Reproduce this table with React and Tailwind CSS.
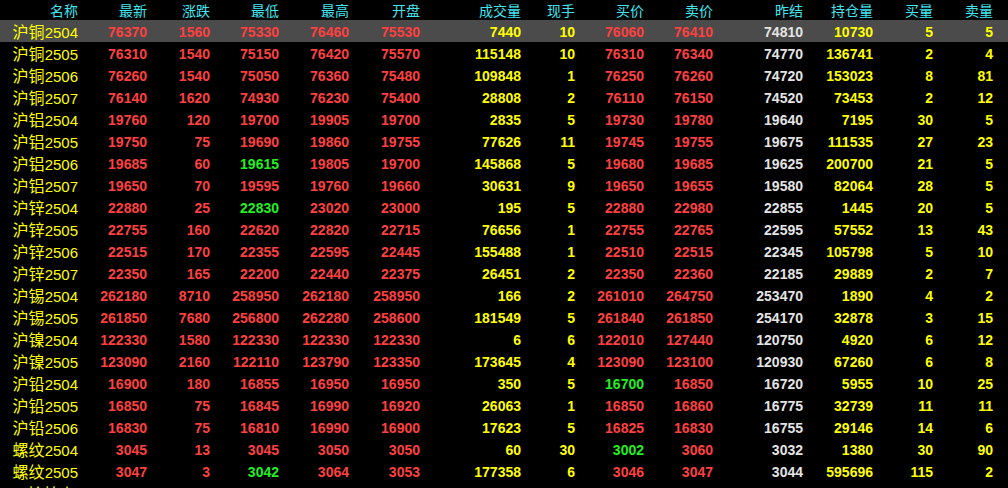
import React from "react";

const cols = ["名称", "最新", "涨跌", "最低", "最高", "开盘", "成交量", "现手", "买价", "卖价", "昨结", "持仓量", "买量", "卖量"];

// name, code, last, chg, low, high, open, vol, cur, bid, ask, prev, oi, bidQ, askQ
const rows = [
  ["沪铜", "2504", 76370, 1560, 75330, 76460, 75530, 7440, 10, 76060, 76410, 74810, 10730, 5, 5],
  ["沪铜", "2505", 76310, 1540, 75150, 76420, 75570, 115148, 10, 76310, 76340, 74770, 136741, 2, 4],
  ["沪铜", "2506", 76260, 1540, 75050, 76360, 75480, 109848, 1, 76250, 76260, 74720, 153023, 8, 81],
  ["沪铜", "2507", 76140, 1620, 74930, 76230, 75400, 28808, 2, 76110, 76150, 74520, 73453, 2, 12],
  ["沪铝", "2504", 19760, 120, 19700, 19905, 19700, 2835, 5, 19730, 19780, 19640, 7195, 30, 5],
  ["沪铝", "2505", 19750, 75, 19690, 19860, 19755, 77626, 11, 19745, 19755, 19675, 111535, 27, 23],
  ["沪铝", "2506", 19685, 60, 19615, 19805, 19700, 145868, 5, 19680, 19685, 19625, 200700, 21, 5],
  ["沪铝", "2507", 19650, 70, 19595, 19760, 19660, 30631, 9, 19650, 19655, 19580, 82064, 28, 5],
  ["沪锌", "2504", 22880, 25, 22830, 23020, 23000, 195, 5, 22880, 22980, 22855, 1445, 20, 5],
  ["沪锌", "2505", 22755, 160, 22620, 22820, 22715, 76656, 1, 22755, 22765, 22595, 57552, 13, 43],
  ["沪锌", "2506", 22515, 170, 22355, 22595, 22445, 155488, 1, 22510, 22515, 22345, 105798, 5, 10],
  ["沪锌", "2507", 22350, 165, 22200, 22440, 22375, 26451, 2, 22350, 22360, 22185, 29889, 2, 7],
  ["沪锡", "2504", 262180, 8710, 258950, 262180, 258950, 166, 2, 261010, 264750, 253470, 1890, 4, 2],
  ["沪锡", "2505", 261850, 7680, 256800, 262280, 258600, 181549, 5, 261840, 261850, 254170, 32878, 3, 15],
  ["沪镍", "2504", 122330, 1580, 122330, 122330, 122330, 6, 6, 122010, 127440, 120750, 4920, 6, 12],
  ["沪镍", "2505", 123090, 2160, 122110, 123790, 123350, 173645, 4, 123090, 123100, 120930, 67260, 6, 8],
  ["沪铅", "2504", 16900, 180, 16855, 16950, 16950, 350, 5, 16700, 16850, 16720, 5955, 10, 25],
  ["沪铅", "2505", 16850, 75, 16845, 16990, 16920, 26063, 1, 16850, 16860, 16775, 32739, 11, 11],
  ["沪铅", "2506", 16830, 75, 16810, 16990, 16900, 17623, 5, 16825, 16830, 16755, 29146, 14, 6],
  ["螺纹", "2504", 3045, 13, 3045, 3050, 3050, 60, 30, 3002, 3060, 3032, 1380, 30, 90],
  ["螺纹", "2505", 3047, 3, 3042, 3064, 3053, 177358, 6, 3046, 3047, 3044, 595696, 115, 2],
];

const grid =
  "grid grid-cols-[78px_69px_63px_69px_70px_71px_101px_54px_69px_69px_90px_70px_60px_60px]";

const RED = "text-[#ff4040]";
const GREEN = "text-[#22f022]";
const YELLOW = "text-[#ffff00]";
const WHITE = "text-[#e4e4e4]";

const priceColor = (v, prev) => (v < prev ? GREEN : RED);

const Num = ({ v, color }) => (
  <div className={`text-right font-bold text-[14px] leading-[22px] ${color}`}>{v}</div>
);

const Row = ({ r, active }) => {
  const [name, code, last, chg, low, high, open, vol, cur, bid, ask, prev, oi, bq, aq] = r;
  return (
    <div className={`${grid} h-[22px] items-center ${active ? "bg-[#4b4b4b]" : ""}`}>
      <div className="text-right text-[#ffff00] leading-[22px] whitespace-nowrap">
        <span className="text-[16px] font-['Noto_Sans_CJK_SC',sans-serif]">{name}</span>
        <span className="text-[15px] font-['Liberation_Sans',sans-serif]">{code}</span>
      </div>
      <Num v={last} color={priceColor(last, prev)} />
      <Num v={chg} color={RED} />
      <Num v={low} color={priceColor(low, prev)} />
      <Num v={high} color={priceColor(high, prev)} />
      <Num v={open} color={priceColor(open, prev)} />
      <Num v={vol} color={YELLOW} />
      <Num v={cur} color={YELLOW} />
      <Num v={bid} color={priceColor(bid, prev)} />
      <Num v={ask} color={priceColor(ask, prev)} />
      <Num v={prev} color={WHITE} />
      <Num v={oi} color={YELLOW} />
      <Num v={bq} color={YELLOW} />
      <Num v={aq} color={YELLOW} />
    </div>
  );
};

export default function App() {
  return (
    <div className="w-[1008px] h-[488px] overflow-hidden bg-black font-['Liberation_Sans','Noto_Sans_CJK_SC',sans-serif]">
      {/* header */}
      <div className={`${grid} h-[20px] pt-[1px] text-[14px] leading-[19px] text-[#40e6f0] font-['Noto_Sans_CJK_SC',sans-serif]`}>
        {cols.map((c) => (
          <div key={c} className="text-right">{c}</div>
        ))}
      </div>

      {rows.map((r, i) => (
        <Row key={r[0] + r[1]} r={r} active={i === 0} />
      ))}

      {/* next row, cut off by the window */}
      <div className="h-[22px] flex items-center pl-[22px] text-[16px] text-[#ffff00] font-['Noto_Sans_CJK_SC',sans-serif]">
        -拾棉上
      </div>
    </div>
  );
}
